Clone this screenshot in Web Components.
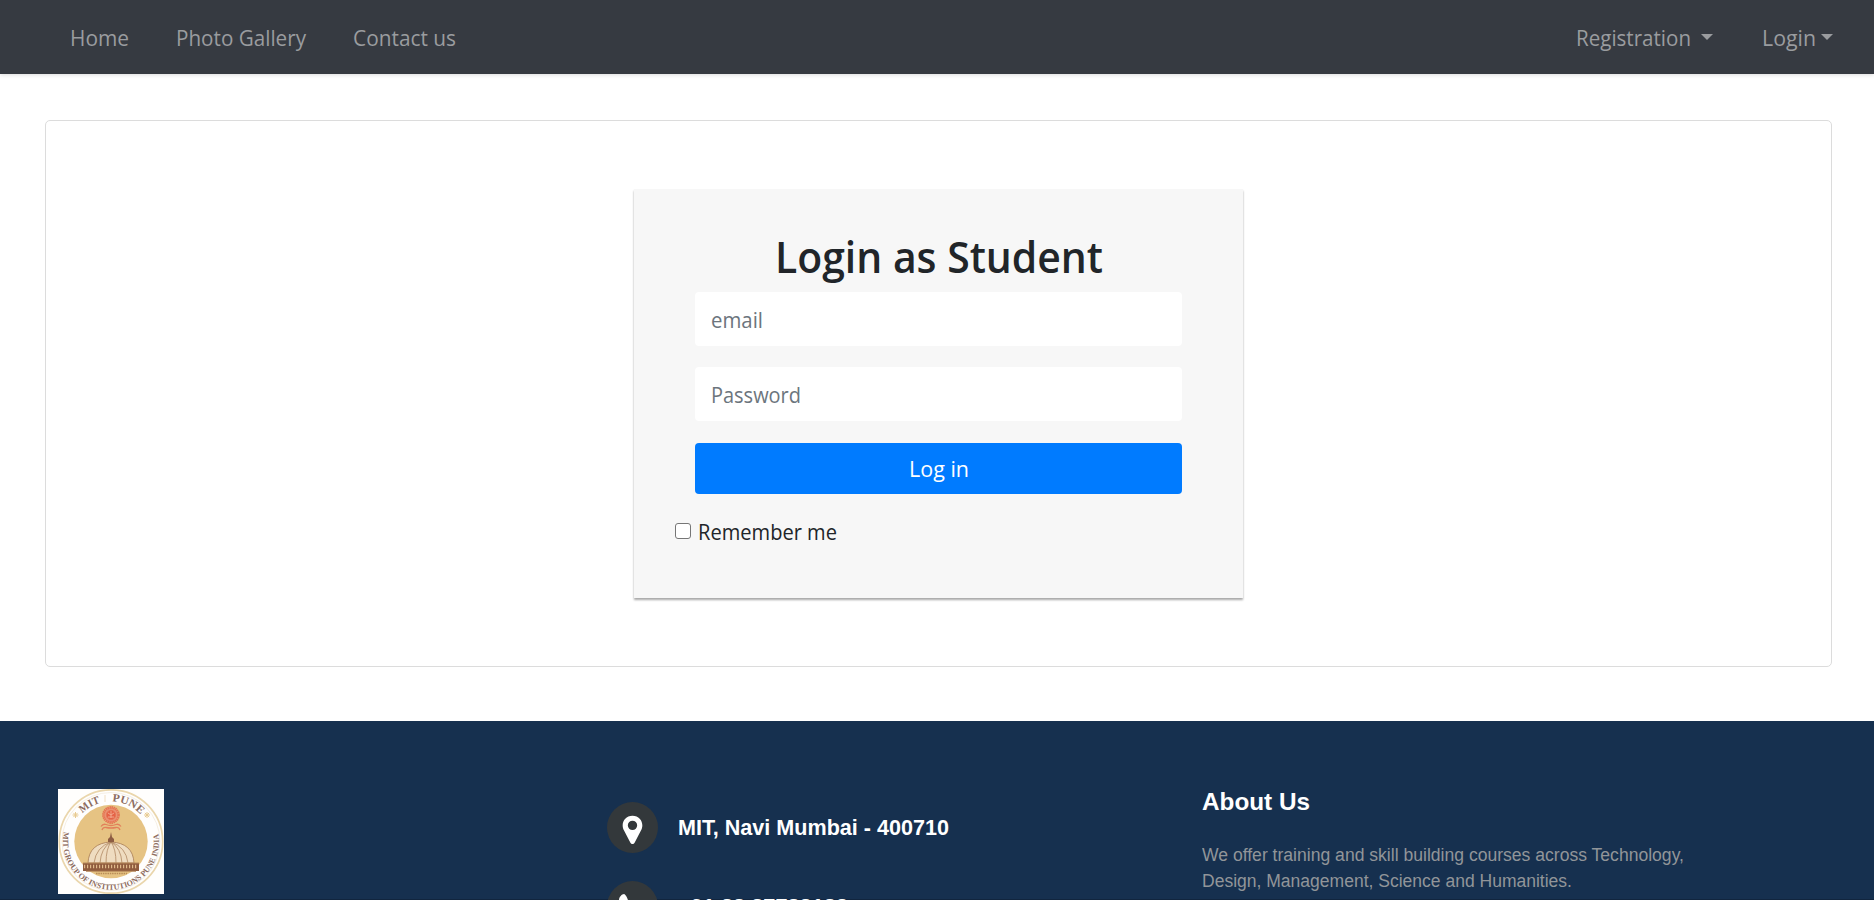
<!DOCTYPE html>
<html lang="en">
<head>
<meta charset="utf-8">
<title>Login as Student</title>
<style>
body{margin:0;height:900px;overflow:hidden;background:#fff;font-family:"Open Sans","Noto Sans",sans-serif;font-size:22.4px;color:#212529}
</style>
</head>
<body>
<student-page></student-page>
<script>
const define = (name, html, ready) => customElements.define(name, class extends HTMLElement {
  connectedCallback() {
    if (this.shadowRoot) return;
    const t = document.createElement('template');
    t.innerHTML = html;
    this.attachShadow({ mode: 'open' }).append(t.content.cloneNode(true));
    if (ready) ready(this, this.shadowRoot);
  }
});

// A single line of text condensed or widened to a given advance width.
define('fit-text', `<style>:host{display:inline-block;white-space:pre}span{display:inline-block;transform-origin:0 50%}</style><span><slot></slot></span>`, (el, root) => {
  const s = root.querySelector('span'), w = +el.getAttribute('w');
  s.style.transform = 'scaleX(' + w / s.getBoundingClientRect().width + ')';
  el.style.width = w + 'px';
});

define('nav-item', `<style>
:host{display:flex;align-items:center;color:#9a9c9f}
i{display:none;border:6.6px solid transparent;border-top-color:currentColor;border-bottom:0;margin:-2px 0 0 var(--gap,5px)}
:host([menu]) i{display:block}
</style><slot></slot><i></i>`);

define('site-nav', `<style>
:host{display:flex;justify-content:space-between;height:74px;box-sizing:border-box;padding:0 41px 0 70px;background:#363a41;box-shadow:0 1px 4px rgba(0,0,0,.14);font-size:22.4px;line-height:30px}
div{display:flex;align-items:center;padding-top:2px}
.l{gap:47px}.r{gap:49px}
</style>
<div class="l"><nav-item><fit-text w="59">Home</fit-text></nav-item><nav-item><fit-text w="130">Photo Gallery</fit-text></nav-item><nav-item><fit-text w="103">Contact us</fit-text></nav-item></div>
<div class="r"><nav-item menu style="--gap:10px"><fit-text w="115">Registration</fit-text></nav-item><nav-item menu style="--gap:5px"><fit-text w="54">Login</fit-text></nav-item></div>`);

define('text-field', `<style>
:host{display:flex;align-items:center;height:54px;box-sizing:border-box;padding:1px 16px 0;background:#fff;border-radius:4px;color:#6c757d}
</style><slot></slot>`);

define('login-panel', `<style>
:host{display:block;box-sizing:border-box;width:609px;height:409px;padding:37px 61px 0;background:#f7f7f7;box-shadow:0 2px 2px rgba(0,0,0,.34)}
h2{margin:0;height:66px;font-size:44px;line-height:60px;font-weight:600;text-align:center}
text-field{margin-bottom:21px}
button{display:block;width:100%;height:51px;margin-top:22px;border:0;border-radius:4px;background:#007bff;color:#fff;font:inherit;padding:0 0 1px}
label{display:flex;align-items:center;margin:21px 0 0 -20px;height:32px}
b{box-sizing:border-box;width:16px;height:16px;border:1.3px solid #767676;border-radius:3px;background:#fff;margin:-1px 7px 0 0}
</style>
<h2><fit-text w="328">Login as Student</fit-text></h2>
<text-field><fit-text w="52">email</fit-text></text-field>
<text-field style="margin-bottom:0"><fit-text w="90">Password</fit-text></text-field>
<button><fit-text w="60">Log in</fit-text></button>
<label><b></b><fit-text w="139">Remember me</fit-text></label>`);

define('college-seal', `<style>:host{display:block;width:106px;height:105px}svg{display:block}text{font-family:"Liberation Serif",serif;font-weight:bold;fill:#8d6c60}</style>
<svg width="106" height="105" viewBox="0 0 106 105">
<rect width="106" height="105" fill="#fffefd"/>
<circle cx="53" cy="52.5" r="51.7" fill="none" stroke="#ead6ac" stroke-width="1.7"/>
<circle cx="53" cy="52.5" r="49" fill="none" stroke="#f1e8d8" stroke-width=".7"/>
<circle cx="53" cy="52.5" r="36.7" fill="#e6c383"/>
<defs><path id="top" d="M13 52.5a40 40 0 0 1 80 0"/><path id="bot" d="M6.200 42A48 48 0 1 0 99.800 42"/></defs>
<text font-size="11"><textPath href="#top" startOffset="31" textLength="21" lengthAdjust="spacingAndGlyphs">MIT</textPath></text>
<text font-size="11"><textPath href="#top" startOffset="64" textLength="32" lengthAdjust="spacingAndGlyphs">PUNE</textPath></text>
<path d="M47 6v7" stroke="#efd9b5" stroke-width=".8"/>
<text font-size="8"><textPath href="#bot" startOffset="1" textLength="168" lengthAdjust="spacingAndGlyphs">MIT GROUP OF INSTITUTIONS PUNE INDIA</textPath></text>
<g stroke="#e8cb91" stroke-width="1"><path id="st" d="M14.500 26h6M17.500 23v6M15.400 23.900l4.200 4.200M19.600 23.900l-4.200 4.200"/><use href="#st" x="71.5"/></g>
<g fill="none" stroke="#e57654"><circle cx="53" cy="26" r="7.600" fill="#eb9274" stroke-width="2.600" stroke-dasharray="1.5 .5"/><circle cx="53" cy="26" r="4.600" fill="#e56247" stroke-width="1"/><path d="M50 24l3 2 3-2M50 28h6M53 22v7" stroke="#f5b79b" stroke-width=".8"/><path d="M43 37.500q2-3 5-2 5 2 10 0 3-1 5 2M44 41q1-3 4-2.500 5 1 10 0 3-.5 4 2.500" stroke="#e2805a" stroke-width="1.300"/></g>
<path d="M30 74Q31 54 53 53Q75 54 76 74z" fill="#efdcc0" stroke="#a87c56" stroke-width=".8"/>
<path d="M36 74Q38 58 53 53Q68 58 70 74M42 74Q43 59 53 53Q63 59 64 74M48 74Q48 60 53 53Q58 60 58 74" fill="none" stroke="#a87c56" stroke-width=".7"/>
<path d="M50 53v-3l2-2 1-5 1 5 2 2v3z" fill="#8d5c42"/>
<path d="M25 74h56v8H25z" fill="#8f5b3d"/>
<path d="M26 77.500h54" stroke="#dfb98a" stroke-width="3.500" stroke-dasharray="1.2 1.8"/>
<path d="M25 74h56M28 82.300h50" stroke="#b88a5c" stroke-width="1"/>
<path d="M38 84.500h31" stroke="#b98c56" stroke-width="1.300" stroke-dasharray="1.5 .8"/>
</svg>`);

define('contact-row', `<style>
:host{display:flex;align-items:center;height:51px;gap:20px;color:#fff;font:bold 21.9px/30px "Liberation Sans",sans-serif}
.c{width:51px;height:51px;border-radius:50%;background:#33383b;display:flex;align-items:center;justify-content:center}
::slotted(svg){display:block}
</style><div class="c"><slot name="icon"></slot></div><slot></slot>`);

define('site-footer', `<style>
:host{display:grid;grid-template-columns:549px 595px 1fr;height:179px;overflow:hidden;padding-left:58px;background:#16304f;box-sizing:border-box;box-shadow:inset 0 -1px #11253e}
college-seal{margin-top:68px}
.contacts{padding-top:81px}
.contacts contact-row+contact-row{margin-top:28px}
.about{font-family:"Liberation Sans",sans-serif;padding-top:66px}
h3{margin:0;font-size:24px;line-height:30px;color:#fff}
p{margin:25px 0 0;font-size:18px;line-height:26px;color:#919599}
p fit-text{display:block}
</style>
<college-seal></college-seal>
<div class="contacts">
<contact-row><svg slot="icon" width="21" height="30" viewBox="0 0 22 30" style="margin-top:5px"><path fill="#fff" fill-rule="evenodd" d="M11 0C4.600 0 .7 4.700.7 10c0 2 .5 3.700 1.300 5.300l6.800 13c1 1.900 3.400 1.900 4.400 0l6.800-13c.8-1.600 1.300-3.300 1.300-5.300C21.300 4.700 17.400 0 11 0zM11 5.200a4.900 4.900 0 1 1 0 9.800 4.900 4.900 0 0 1 0-9.800z"/></svg><fit-text w="271">MIT, Navi Mumbai - 400710</fit-text></contact-row>
<contact-row><svg slot="icon" width="26" height="26" viewBox="0 0 26 26" style="margin-left:-3px"><path fill="#fff" d="M1 6C1 3 4 0 6 0c1.500 0 4 5 4 6.500C10 8 7 9 7 10.500c0 2 6.500 8.500 8.500 8.500 1.500 0 2.500-3 4-3S26 19 26 20.500c0 2-3 5-6 5C12 25.500 1 14 1 6z"/></svg><fit-text w="170">+91 22 27782183</fit-text></contact-row>
</div>
<div class="about"><h3><fit-text w="108">About Us</fit-text></h3>
<p><fit-text w="482">We offer training and skill building courses across Technology,</fit-text><fit-text w="370">Design, Management, Science and Humanities.</fit-text></p></div>`);

define('student-page', `<style>
:host{display:flex;flex-direction:column;height:900px;overflow:hidden}
site-nav,site-footer{flex:none}
main{box-sizing:border-box;height:547px;margin:46px 42px 54px 45px;border:1px solid #dcdcdc;border-radius:5px;padding:68px 0 0;display:flex;justify-content:center}
</style>
<site-nav></site-nav><main><login-panel></login-panel></main><site-footer></site-footer>`);
</script>
</body>
</html>
